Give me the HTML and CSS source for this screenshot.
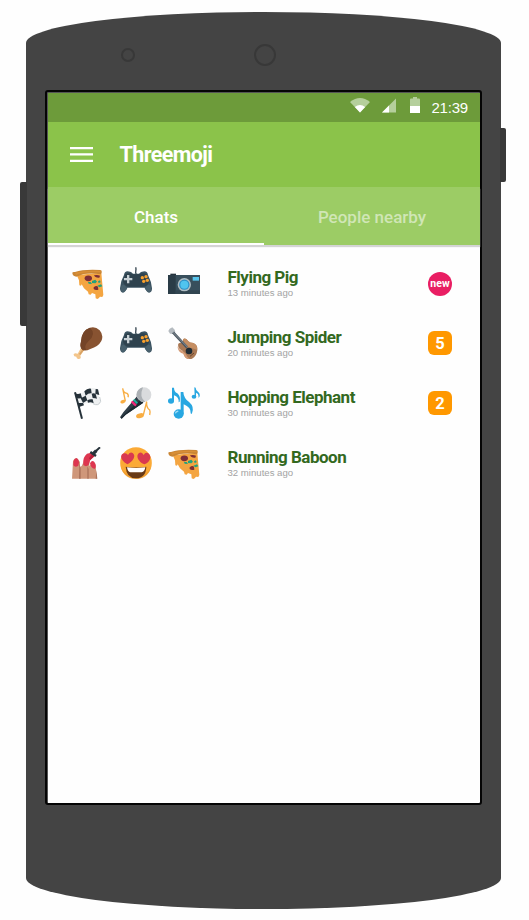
FILE: index.html
```html
<!DOCTYPE html>
<html lang="en">
<head>
<meta charset="utf-8">
<title>Threemoji</title>
<link rel="stylesheet" href="styles.css">
</head>
<body>
<svg class="defs" width="0" height="0" aria-hidden="true">
  <symbol id="pizza" viewBox="0 0 96 96">
    <path fill="#f4a541" d="M14 24 88 17 94 84 91 90 84 89 80 94 76 96 71 94 70 82 60 78 56 83 50 82 48 74 36 64 29 52 27 56 22 55 21 40Z"/>
    <path fill="#c98534" d="M1 19Q0 14 9 15Q35 6 85 9Q91 10 89 17L86 22Q63 17 35 21L13 29Q3 29 1 19Z"/>
    <path fill="#d98f36" d="M9 17Q40 9 86 12V16Q40 13 12 24Z"/>
    <ellipse cx="49" cy="34" rx="11" ry="8.500" fill="#7d2e37"/>
    <path fill="#7d2e37" d="M66 25Q76 22 84 26L82 32Q69 33 66 25M65 61Q73 54 78 59L79 68Q70 71 65 66Z"/>
    <path fill="#22a27e" d="M60 42 70 38 75 44 70 49 60 48M78 43 84 40 86 46 80 48M48 45 56 45 60 51 50 50M76 56 87 52 91 58 82 61"/>
  </symbol>
  <symbol id="pad" viewBox="0 0 96 96">
    <path d="M49 22C43 15 51 11 47 1" fill="none" stroke="#34444f" stroke-width="4"/>
    <path fill="#3b5361" d="M12 24Q13 14 23 13L33 15 39 20H57L63 15 73 13Q83 14 84 24Q95 45 96 64Q96 77 87 77Q80 75 74 62H22Q16 75 9 77Q0 76 0 64Q1 43 12 24Z"/>
    <path fill="#2e424e" d="M16 21Q27 16 39 22H57Q69 16 80 21L87 46Q81 60 69 59H27Q13 58 9 44Z"/>
    <path fill="#48606d" d="M3 60Q8 49 15 56L22 63Q14 76 8 76Q1 73 3 60M93 60Q88 49 81 56L74 63Q82 76 88 76Q95 73 93 60"/>
    <path fill="#c7d0d5" d="M21 24H28V33H37V40H28V49H21V40H12V33H21Z"/>
    <g fill="#f9a02c"><circle cx="67" cy="32" r="5"/><circle cx="78" cy="29" r="5"/><circle cx="71" cy="43" r="5"/><circle cx="82" cy="40" r="5"/></g>
  </symbol>
  <symbol id="camera" viewBox="0 0 96 96">
    <path fill="#26343e" d="M7 20H24V26H7Z"/>
    <path fill="#384f5c" d="M0 24H96V81H0Z"/>
    <path fill="#2a3c47" d="M0 24H23V81H0Z"/>
    <path fill="#314550" d="M23 70H96V81H23Z"/>
    <circle cx="49" cy="53" r="20" fill="#aebcc3"/>
    <circle cx="49" cy="53" r="15.500" fill="#2b8fc7"/>
    <circle cx="49" cy="53" r="12" fill="#50c4ef"/>
    <path fill="#57c4ec" d="M74 30H93V41H74Z"/>
  </symbol>
  <symbol id="drumstick" viewBox="0 0 96 96">
    <path fill="#f3c58b" d="M29 59 38 67 25 86Q29 96 21 96Q14 97 13 89Q4 89 5 82Q9 76 17 80Z"/>
    <path fill="#d7a163" d="M33 64 38 67 25 84 21 81Z"/>
    <path fill="#885331" d="M54 2Q70-3 83 10Q96 25 88 42Q79 59 55 66Q39 74 31 68Q22 62 27 45Q28 11 54 2Z"/>
    <path fill="#744427" d="M54 2Q29 9 27 43Q22 62 31 68L43 69Q34 58 50 42Q74 20 54 2Z"/>
  </symbol>
  <symbol id="guitar" viewBox="0 0 96 96">
    <path fill="#a97854" d="M45 37Q53 30 61 43Q65 48 76 48Q90 54 88 69Q86 88 72 95Q53 101 47 81L44 72Q27 64 31 50Q37 44 45 50Z"/>
    <path fill="#c58e62" d="M45 37Q53 30 61 43Q65 48 76 48Q89 54 87 68L67 62Q56 58 48 50Z"/>
    <path fill="#d39a75" d="M31 50Q27 65 41 70L52 79Q57 90 65 96Q50 96 46 80Q32 77 29 62Z"/>
    <path fill="#b5bbc0" d="M5 5 13 1 20 8 22 16 17 21 6 20 1 12Z"/>
    <path d="M15 16 57 61" stroke="#49545e" stroke-width="8"/><path d="M14 15 58 60" stroke="#a6afb5" stroke-width="2"/>
    <circle cx="63" cy="72" r="10" fill="#202c35"/>
    <path d="M66 88 78 78" stroke="#65462f" stroke-width="3"/>
  </symbol>
  <symbol id="flag" viewBox="0 0 96 96">
    <path fill="#eef0f1" d="M10 18Q25 26 41 10Q56 0 75 5L85 44Q80 60 61 50Q42 43 18 61Z"/>
    <path d="M9 16 30 95" stroke="#26323a" stroke-width="6"/>
    <path fill="#26323a" d="M8 18Q17 24 26 19L30 32Q22 36 12 33ZM37 13Q46 3 57 5L59 19Q49 18 41 26ZM71 6 78 7 82 24Q76 23 70 20ZM26 34 41 26 46 40 33 48ZM59 20Q66 17 71 21L75 35Q70 33 62 33ZM18 48 33 47 36 55 19 61ZM46 40Q54 35 62 37L65 49Q56 43 48 47Z"/>
    <path d="M83 30 86 43Q80 59 63 50" fill="none" stroke="#c8ced1" stroke-width="3"/>
  </symbol>
  <symbol id="mic" viewBox="0 0 96 96">
    <path fill="#2f3e48" d="M51 28 70 47 17 83 5 95 0 91 10 76Z"/>
    <path fill="#1c2932" d="M70 47 17 83 5 95 2 92 61 39Z"/>
    <circle cx="72" cy="23" r="22" fill="#d9dbdd"/>
    <path fill="#abb0b4" d="M61 4Q45 15 51 30L63 44Q70 46 76 44Q56 32 69 1Z"/>
    <path d="M35 43 48 56" stroke="#ed2678" stroke-width="7"/><path d="M41 38 52 49" stroke="#1fb59d" stroke-width="6"/>
    <g fill="#f8ad42"><ellipse cx="9" cy="44" rx="8" ry="5" transform="rotate(-18 9 44)"/><ellipse cx="60" cy="86" rx="12" ry="7" transform="rotate(-15 60 86)"/></g>
    <path d="M16 42 8 4Q10 18 21 19Q27 24 24 31M70 84 80 44Q78 62 89 69Q92 76 89 84" fill="none" stroke="#f8ad42" stroke-width="4"/>
  </symbol>
  <symbol id="notes" viewBox="0 0 96 96">
    <g fill="#28a7e1"><ellipse cx="32" cy="81" rx="15" ry="14"/><path d="M38 15H46Q47 34 64 46Q80 60 72 79Q69 83 68 78Q69 61 47 52V82H38Z"/>
    <ellipse cx="9" cy="42" rx="9" ry="8"/><path d="M12 2H18Q18 14 28 19Q39 29 35 44L32 46Q33 29 18 25V43H12Z"/>
    <ellipse cx="78" cy="29" rx="7" ry="6"/><path d="M79 1 83 2Q83 10 90 14Q98 20 94 30L91 32Q94 20 84 17V31L80 29Z"/></g>
    <path d="M22 79Q24 72 31 73" fill="none" stroke="#9fdcf5" stroke-width="4"/>
  </symbol>
  <symbol id="nails" viewBox="0 0 96 96">
    <path fill="#cf977a" d="M0 95 3 43Q7 30 17 35L24 45V60L29 57 35 44H52V58L58 49Q65 43 70 50L75 95Z"/>
    <path fill="#ab735b" d="M22 49 26 64V95H21ZM46 58 50 66V95H46ZM73 69 76 95H71Z"/>
    <path fill="#dd3650" d="M4 55Q2 35 14 33Q25 42 19 56Q10 63 4 55M34 50Q32 30 45 20L57 17 67 28 55 39 50 54Q42 61 34 54M54 49Q60 38 67 45Q75 58 69 65Q58 67 54 49Z"/>
    <path fill="#b91e3b" d="M60 20 67 28 55 39 51 34Z"/>
    <path d="M55 15 72 27" stroke="#26323a" stroke-width="7"/>
    <path d="M64 20 73 11" stroke="#26323a" stroke-width="10"/>
    <path d="M71 13 84 1" stroke="#26323a" stroke-width="6"/>
  </symbol>
  <symbol id="love" viewBox="0 0 96 96">
    <circle cx="48" cy="48" r="47.500" fill="#fbaa36"/>
    <path fill="#e89427" d="M3 61Q14 86 48 86T93 61Q84 96 48 96T3 61Z" opacity=".55"/>
    <path fill="#d93950" d="M22 52C1 40-2 23 12 19Q20 17 24 24Q30 14 38 18C49 26 40 44 22 52M74 52C92 44 97 25 83 18Q75 16 71 24Q65 14 57 18C46 26 55 45 74 52"/>
    <path fill="#6a3b16" d="M17 59Q48 64 79 59Q78 93 48 94Q19 93 17 59Z"/>
    <path fill="#fff" d="M21 61Q48 65 76 61Q74 75 65 76H31Q23 75 21 61Z"/>
  </symbol>
</svg>

<main class="phone">
  <span class="sensor"></span>
  <span class="lens"></span>
  <span class="key key-left"></span>
  <span class="key key-right"></span>
  <div class="screen">
    <div class="status">
      <svg class="wifi" viewBox="0 0 20 15"><path fill="#b5cf9c" d="M10 14.500 0 4Q10-4 20 4Z"/><path fill="#fff" d="M10 14.500 4.800 9Q10 5 15.200 9Z"/></svg>
      <svg class="signal" viewBox="0 0 15 15"><path fill="#b5cf9c" d="M15 0V15H0Z"/><path fill="#fff" d="M7.500 7.500V15H0Z"/></svg>
      <svg class="battery" viewBox="0 0 10 16"><path fill="#b5cf9c" d="M3 0H7V1.500H9Q10 1.500 10 2.500V9H0V2.500Q0 1.500 1 1.500H3Z"/><path fill="#fff" d="M0 9H10V16H0Z"/></svg>
      <span class="clock">21:39</span>
    </div>
    <header class="appbar">
      <svg class="menu" viewBox="0 0 23 15"><path fill="#fff" d="M0 0H23V2.300H0ZM0 6.300H23V8.600H0ZM0 12.700H23V15H0Z"/></svg>
      <h1 class="title">Threemoji</h1>
    </header>
    <nav class="tabs">
      <span class="tab tab-active">Chats</span>
      <span class="tab">People nearby</span>
    </nav>
    <ul class="chats">
      <li class="chat">
        <div class="emojis"><svg><use href="#pizza"/></svg><svg><use href="#pad"/></svg><svg><use href="#camera"/></svg></div>
        <div class="info"><span class="name">Flying Pig</span><span class="ago">13 minutes ago</span></div>
        <span class="badge badge-new">new</span>
      </li>
      <li class="chat">
        <div class="emojis"><svg><use href="#drumstick"/></svg><svg><use href="#pad"/></svg><svg><use href="#guitar"/></svg></div>
        <div class="info"><span class="name">Jumping Spider</span><span class="ago">20 minutes ago</span></div>
        <span class="badge">5</span>
      </li>
      <li class="chat">
        <div class="emojis"><svg><use href="#flag"/></svg><svg><use href="#mic"/></svg><svg><use href="#notes"/></svg></div>
        <div class="info"><span class="name">Hopping Elephant</span><span class="ago">30 minutes ago</span></div>
        <span class="badge">2</span>
      </li>
      <li class="chat">
        <div class="emojis"><svg><use href="#nails"/></svg><svg><use href="#love"/></svg><svg><use href="#pizza"/></svg></div>
        <div class="info"><span class="name">Running Baboon</span><span class="ago">32 minutes ago</span></div>
      </li>
    </ul>
  </div>
</main>
</body>
</html>
```
FILE: styles.css
```css
* { box-sizing: border-box; }
body {
  margin: 0;
  height: 920px;
  padding: 12px 28px 11px 26px;
  background: #fefefe;
  font-family: Roboto, "Liberation Sans", sans-serif;
  overflow: hidden;
}
.defs { position: absolute; }
.phone {
  position: relative;
  width: 475px;
  height: 897px;
  padding: 78px 19px 0;
  background: #444;
  border-radius: 50% / 31px;
}
.sensor, .lens { position: absolute; border: 2px solid #383838; border-radius: 50%; }
.sensor { left: 95px; top: 36px; width: 14px; height: 14px; }
.lens { left: 228px; top: 32px; width: 22px; height: 22px; }
.key { position: absolute; background: #393939; }
.key-left { left: -6px; top: 170px; width: 7px; height: 144px; border-radius: 2px 0 0 2px; }
.key-right { left: 474px; top: 116px; width: 6px; height: 54px; border-radius: 0 2px 2px 0; }
.screen {
  width: 437px;
  height: 715px;
  padding: 1px 0 0 1px;
  border: 2px solid #050505;
  border-radius: 3px;
  background: linear-gradient(#fefefe, #fefefe) 1px 1px no-repeat, #555;
}
.status {
  display: flex;
  align-items: center;
  justify-content: flex-end;
  height: 29px;
  padding-right: 12px;
  background: #6d9b3a;
}
.wifi { width: 20px; height: 15px; margin-right: 12px; }
.signal { width: 14px; height: 15px; margin: 0 14px 0 0; }
.battery { width: 10px; height: 16px; margin: -5px 11px 0 0; }
.wifi, .signal { margin-top: -4px; }
.clock { font: 15px/29px "Liberation Sans", sans-serif; color: #fff; letter-spacing: -0.2px; }
.appbar {
  display: flex;
  align-items: center;
  height: 65px;
  padding-left: 22px;
  background: #8bc34a;
}
.menu { width: 23px; height: 15px; margin-right: 27px; }
.title { margin: 0 0 0 -0.5px; font-size: 21.5px; font-weight: 700; line-height: 26px; color: #fff; letter-spacing: -0.6px; }
.tabs {
  display: flex;
  height: 58px;
  background: #9ccc65;
  box-shadow: 0 2px 1px #d4d4d4;
}
.tab {
  flex: 1;
  border-bottom: 2px solid transparent;
  font-size: 17px;
  font-weight: 500;
  line-height: 60px;
  text-align: center;
  color: #d0e6b6;
}
.tab-active { color: #fff; border-color: #fff; }
.chats { margin: 0; padding: 8px 28px 0 24px; list-style: none; }
.chat { display: flex; align-items: center; height: 60px; }
.emojis { display: flex; gap: 16px; }
.emojis svg { width: 32px; height: 32px; }
.info { flex: 1; padding: 0 0 2px 27.5px; }
.name { display: block; font-size: 17px; font-weight: 700; line-height: 20px; letter-spacing: -0.5px; color: #33691e; white-space: nowrap; }
.ago { display: block; font: 9.6px/11px "Liberation Sans", sans-serif; color: #a3a3a3; }
.badge {
  width: 24px;
  height: 24px;
  border-radius: 6px;
  background: #ff9800;
  color: #fff;
  font-size: 16.5px;
  font-weight: 700;
  line-height: 25px;
  text-align: center;
}
.badge-new { margin-top: 1px; border-radius: 50%; background: #e91e63; font-size: 10.5px; line-height: 23px; }
```
